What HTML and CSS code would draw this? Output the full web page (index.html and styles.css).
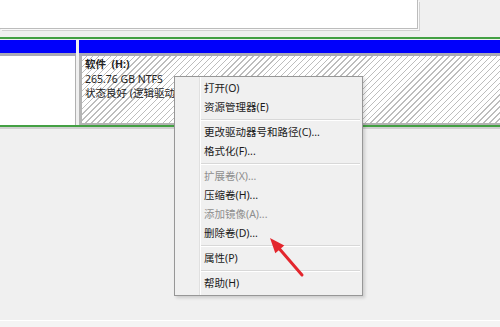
FILE: index.html
```html
<!DOCTYPE html>
<html lang="zh-CN">
<head>
    <meta charset="UTF-8">
    <meta name="viewport" content="width=device-width, initial-scale=1.0">
    <title>磁盘管理</title>
    <link rel="stylesheet" href="styles.css">
</head>
<body>

<div class="top-pane"></div>

<div class="disk-row">
    <div class="disk-label">
        <div class="bar"></div>
        <div class="bar-edge"></div>
        <div class="label-body"></div>
    </div>
    <div class="volume">
        <div class="bar"></div>
        <div class="bar-edge"></div>
        <div class="volume-body">
            <div class="vol-name">软件&nbsp; (H:)</div>
            <div>265.76 GB NTFS</div>
            <div>状态良好 (逻辑驱动器)</div>
        </div>
    </div>
</div>

<div class="status-bar"></div>

<ul class="context-menu">
    <li class="item">打开(O)</li>
    <li class="item">资源管理器(E)</li>
    <li class="separator"></li>
    <li class="item">更改驱动器号和路径(C)...</li>
    <li class="item">格式化(F)...</li>
    <li class="separator"></li>
    <li class="item disabled">扩展卷(X)...</li>
    <li class="item">压缩卷(H)...</li>
    <li class="item disabled">添加镜像(A)...</li>
    <li class="item">删除卷(D)...</li>
    <li class="separator"></li>
    <li class="item">属性(P)</li>
    <li class="separator"></li>
    <li class="item">帮助(H)</li>
</ul>

<!-- annotation arrow pointing at 删除卷 -->
<svg class="arrow" width="52" height="52" viewBox="0 0 52 52">
    <line x1="44" y1="47" x2="19" y2="18" stroke="#e3262d" stroke-width="3" stroke-linecap="round"/>
    <polygon points="12,10 26.3,17.4 17.3,25.2" fill="#e3262d"/>
</svg>

</body>
</html>
```

FILE: styles.css
```css
body {
    margin: 0;
    height: 100vh;
    display: flex;
    flex-direction: column;
    background-color: #f0f0f0;
    font-family: "Noto Sans", "Noto Sans CJK SC", sans-serif;
    color: #1a1a1a;
    overflow: hidden;
}

.top-pane {
    align-self: flex-start;
    width: 417px;
    height: 28px;
    background-color: #fff;
    border-right: 1px solid #bcbcbc;
    border-bottom: 1px solid #bcbcbc;
    box-shadow: 1px 1px 0 #f9f9f9, 2px 2px 0 #d2d2d2;
    margin-bottom: 8px;
}

.disk-row {
    display: grid;
    grid-template-columns: 76px 1fr;
    column-gap: 3px;
    padding-top: 1px;
    border-top: 2px solid #43a043;
    border-bottom: 2px solid #43a043;
    box-shadow: 0 2px 0 #d0d0d0;
}

.bar {
    height: 13px;
    background-color: #0000fb;
}

.bar-edge {
    height: 3px;
    background-color: #a9a9b6;
}

.label-body {
    height: 69px;
    background-color: #fff;
    border-right: 1px solid #b0b0b0;
}

.volume-body {
    height: 66px;
    padding: 1px 0 0 3px;
    border-left: 3px solid #b3b3b3;
    border-bottom: 2px solid #b3b3b3;
    background-color: #fff;
    background-image: repeating-linear-gradient(135deg, #fff 0 3.2px, #bdbdbd 3.2px 4.2px);
    font-size: 10.5px;
    line-height: 14.5px;
    color: #222;
}

.vol-name {
    font-weight: bold;
}

.status-bar {
    margin-top: auto;
    height: 6px;
    border-top: 1px solid #fff;
    background-color: #f4f4f4;
}

.context-menu {
    position: absolute;
    left: 174px;
    top: 76px;
    width: 183px;
    margin: 0;
    padding: 2px;
    list-style: none;
    border: 1px solid #979797;
    background-color: #f0f0f0;
    background-image: linear-gradient(to right, transparent 24px, #e0e0e0 24px 25px, #fff 25px 26px, transparent 26px);
    box-shadow: 2px 2px 3px rgba(0, 0, 0, 0.15);
    font-size: 10.5px;
}

.item {
    height: 19px;
    line-height: 19px;
    padding-left: 27px;
    white-space: nowrap;
}

.item.disabled {
    color: #8e8e8e;
}

.separator {
    height: 6px;
    display: flex;
    flex-direction: column;
    justify-content: center;
    padding-left: 24px;
}

.separator::before {
    content: "";
    height: 1px;
    background-color: #d8d8d8;
    border-bottom: 1px solid #fff;
}

.arrow {
    position: absolute;
    left: 258px;
    top: 228px;
}
```
